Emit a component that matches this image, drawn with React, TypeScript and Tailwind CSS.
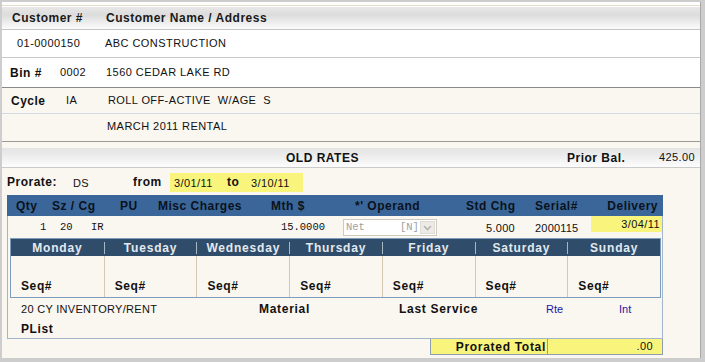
import React from "react";

const sans = { fontFamily: '"Liberation Sans", Arial, sans-serif' };

const days = ["Monday", "Tuesday", "Wednesday", "Thursday", "Friday", "Saturday", "Sunday"];

export default function App() {
  return (
    <div
      className="w-[705px] h-[362px] bg-[#cdcdcd] pt-[2px] pl-[2px] pr-[4px] pb-[4px] text-[#111]"
      style={sans}
    >
      <div className="h-full flex flex-col bg-[#faf6f0] border-r border-[#a9a9a9]">
        {/* top strip */}
        <div className="h-[5px] bg-white flex flex-col">
          <div className="h-[3px]" />
          <div className="h-px bg-[#e6dccb]" />
          <div className="h-px" />
        </div>
        {/* header */}
        <div className="h-[23px] border-b border-[#c4c4c4] bg-[linear-gradient(to_bottom,#e8e8e8,#dcdcdc_35%,#fbfbfb)] flex items-center text-[12px] font-bold tracking-[0.5px] text-[#1a1a1a]">
          <span className="pl-[10px] w-[104px]">Customer #</span>
          <span>Customer Name / Address</span>
        </div>
        {/* row 1 */}
        <div className="h-[28px] border-b border-[#c8c8c8] bg-white flex items-center text-[11px] tracking-[0.45px]">
          <span className="pl-[15px] w-[103px]">01-0000150</span>
          <span>ABC CONSTRUCTION</span>
        </div>
        {/* row 2 */}
        <div className="h-[30px] border-b border-[#8a8a8a] bg-white flex items-center">
          <span className="pl-[8px] w-[58px] text-[12px] font-bold tracking-[0.5px]">Bin #</span>
          <span className="w-[46px] text-[11px] tracking-[0.4px]">0002</span>
          <span className="text-[11px] tracking-[0.45px]">1560 CEDAR LAKE RD</span>
        </div>
        {/* row 3 */}
        <div className="h-[26px] border-b border-[#d3d9e3] flex items-center">
          <span className="pl-[9px] w-[64px] text-[12px] font-bold tracking-[0.5px]">Cycle</span>
          <span className="w-[42px] text-[11px] tracking-[0.4px]">IA</span>
          <span className="text-[11px] tracking-[0.4px] whitespace-pre">ROLL OFF-ACTIVE  W/AGE  S</span>
        </div>
        {/* row 4 */}
        <div className="h-[28px] border-b border-[#9a9a9a] flex items-center pb-[3px]">
          <span className="pl-[105px] text-[11px] tracking-[0.45px]">MARCH 2011 RENTAL</span>
        </div>
        <div className="h-[6px]" />
        {/* old rates bar */}
        <div className="h-[20px] border-b border-[#cacaca] bg-[linear-gradient(to_bottom,#e4e4e4,#ececec_40%,#fdfdfd)] flex items-center">
          <span className="pl-[284px] w-[565px] text-[12px] font-bold tracking-[0.5px]">OLD RATES</span>
          <span className="w-[70px] text-[12px] font-bold tracking-[0.5px]">Prior Bal.</span>
          <span className="flex-1 text-right pr-[5px] text-[11px] tracking-[0.4px]">425.00</span>
        </div>
        {/* prorate row */}
        <div className="h-[27px] pt-[5px] flex items-start">
          <div className="h-[19px] flex items-end pb-[1px]">
            <span className="pl-[5px] w-[71px] text-[12px] font-bold tracking-[0.5px]">Prorate:</span>
            <span className="w-[60px] text-[11px] tracking-[0.4px]">DS</span>
            <span className="w-[37px] text-[12px] font-bold tracking-[0.5px]">from</span>
          </div>
          <div className="h-[19px] w-[133px] bg-[#f9f57c] flex items-end pb-[1px]">
            <span className="pl-[4px] w-[57px] text-[11px] tracking-[0.4px]">3/01/11</span>
            <span className="w-[24px] text-[12px] font-bold tracking-[0.5px]">to</span>
            <span className="text-[11px] tracking-[0.4px]">3/10/11</span>
          </div>
        </div>
        {/* panel */}
        <div className="ml-[5px] w-[656px] flex flex-col">
          <div className="h-[21px] bg-[#3a6699] flex items-center text-[12px] font-bold tracking-[0.5px] text-[#0a1220]">
            <span className="pl-[9px] w-[45px]">Qty</span>
            <span className="w-[68px]">Sz / Cg</span>
            <span className="w-[38px]">PU</span>
            <span className="w-[113px]">Misc Charges</span>
            <span className="w-[84px]">Mth $</span>
            <span className="w-[111px]">*' Operand</span>
            <span className="w-[69px]">Std Chg</span>
            <span className="w-[71px]">Serial#</span>
            <span className="flex-1 text-right pr-[5px]">Delivery</span>
          </div>
          <div className="border-x border-b border-[#a3b6cc] flex flex-col">
            {/* data row */}
            <div className="h-[22px] flex items-start">
              <div className="w-[317px] h-[22px] flex items-center pt-[2px]">
                <span
                  className="pl-[32px] w-[52px] text-[10.5px] text-[#111]"
                  style={{ fontFamily: '"Liberation Mono", "Courier New", monospace' }}
                >
                  1
                </span>
                <span
                  className="w-[31px] text-[10.5px] text-[#111]"
                  style={{ fontFamily: '"Liberation Mono", "Courier New", monospace' }}
                >
                  20
                </span>
                <span
                  className="flex-1 text-[10.5px] text-[#111]"
                  style={{ fontFamily: '"Liberation Mono", "Courier New", monospace' }}
                >
                  IR
                </span>
                <span
                  className="text-[10.5px] text-[#111]"
                  style={{ fontFamily: '"Liberation Mono", "Courier New", monospace' }}
                >
                  15.0000
                </span>
              </div>
              <div className="ml-[18px] mt-[3px] w-[94px] h-[17px] border border-[#cfcac0] bg-white flex items-center text-[#a0a0a0]">
                <span
                  className="pl-[2px] w-[56px] text-[10.5px] whitespace-pre"
                  style={{ fontFamily: '"Liberation Mono", "Courier New", monospace' }}
                >
                  Net
                </span>
                <span
                  className="w-[20px] text-[10.5px]"
                  style={{ fontFamily: '"Liberation Mono", "Courier New", monospace' }}
                >
                  [N]
                </span>
                <div className="w-[15px] h-[13px] bg-[#ecebe6] border border-[#dedbd3] flex items-center justify-center">
                  <svg width="9" height="6" viewBox="0 0 9 6">
                    <path d="M1 1 L4.5 4.5 L8 1" fill="none" stroke="#b4b4b4" strokeWidth="1.6" />
                  </svg>
                </div>
              </div>
              <div className="w-[78px] h-[22px] flex items-center justify-end pt-[3px] text-[11px] tracking-[0.3px]">
                5.000
              </div>
              <div className="w-[20px]" />
              <div className="w-[56px] h-[22px] flex items-center pt-[2px] text-[11px] tracking-[0.2px]">
                2000115
              </div>
              <div className="flex-1 h-[16px] bg-[#f9f57c] flex items-center justify-end pr-[2px] text-[11px] tracking-[0.4px]">
                3/04/11
              </div>
            </div>
            {/* weekday table */}
            <div className="ml-[2px] w-[651px] h-[60px] border border-[#7f9bbd] flex flex-col">
              <div className="h-[17px] bg-[#2f4d6a] grid grid-cols-7">
                {days.map((d, i) => (
                  <div key={d} className="flex items-center">
                    {i > 0 ? <div className="w-px h-[12px] bg-[#a9b6c4]" /> : null}
                    <span className="flex-1 text-center text-[12px] font-bold tracking-[0.8px] text-[#e4e9ef]">
                      {d}
                    </span>
                  </div>
                ))}
              </div>
              <div className="flex-1 grid grid-cols-7">
                {days.map((d, i) => (
                  <div
                    key={d}
                    className={
                      i > 0
                        ? "border-l border-[#d2c7b3] flex items-end pl-[10px] pb-[2px]"
                        : "flex items-end pl-[10px] pb-[2px]"
                    }
                  >
                    <span className="text-[12px] font-bold tracking-[0.6px]">Seq#</span>
                  </div>
                ))}
              </div>
            </div>
            {/* bottom lines */}
            <div className="h-[20px] flex items-center pt-[2px]">
              <span className="pl-[13px] w-[251px] text-[11px] tracking-[0.3px]">20 CY INVENTORY/RENT</span>
              <span className="w-[140px] text-[12px] font-bold tracking-[0.7px]">Material</span>
              <span className="w-[147px] text-[12px] font-bold tracking-[0.7px]">Last Service</span>
              <span className="w-[73px] text-[11px] text-[#1818a8]">Rte</span>
              <span className="text-[11px] text-[#1818a8]">Int</span>
            </div>
            <div className="h-[20px] flex items-center pt-[2px]">
              <span className="pl-[13px] text-[12px] font-bold tracking-[0.6px]">PList</span>
            </div>
          </div>
          {/* prorated total */}
          <div className="ml-[423px] w-[233px] h-[16px] bg-[#f9f57c] border-x border-b border-[#8f9db0] flex items-center">
            <span className="w-[117px] h-full border-r border-[#8f9db0] flex items-center justify-end pr-[1px] text-[12px] font-bold tracking-[0.7px]">
              Prorated Total
            </span>
            <span className="flex-1 text-right pr-[9px] text-[11px] tracking-[0.4px]">.00</span>
          </div>
        </div>
      </div>
    </div>
  );
}
